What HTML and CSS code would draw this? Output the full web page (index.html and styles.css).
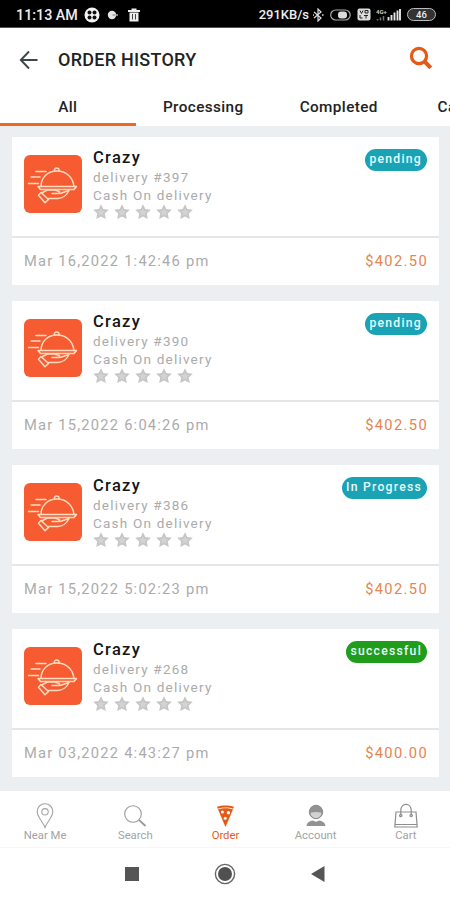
FILE: index.html
```html
<!DOCTYPE html>
<html lang="en">

<head>
  <meta charset="UTF-8">
  <meta name="viewport" content="width=device-width, initial-scale=1">
  <title>Order History</title>
  <link rel="stylesheet" href="styles.css">
</head>

<body>

  <!-- shared icons -->
  <svg class="sprite">
    <symbol id="star" viewBox="0 0 16 16">
      <path d="M8 .3l2.300 4.800 5.500.7-4 3.700 1 5.500L8 12.400l-4.800 2.600 1-5.500L.2 5.800l5.500-.7z" fill="#c6c6c6" />
      <path d="M8 4l1.200 2.700 2.900.3L10 9l.6 2.900L8 10.500l-2.600 1.400L6 9 3.900 7l2.900-.3z" fill="#d3d3d3" />
    </symbol>
    <symbol id="dish" viewBox="0 0 58 58">
      <g fill="none" stroke="#ffdcc0" stroke-width="1.500" stroke-linecap="round" stroke-linejoin="round">
        <path d="M12 16.500h10M7 22h9M4.500 28.500h10" />
        <path d="M17 31.500C17 22 24 16 33 16s16 6 17 15.500" />
        <path d="M30.500 15.800c-1-3.600 5.500-3.600 4.500 0" />
        <path d="M14 31.500h38.500l-2.500 3H16.500z" />
        <path d="M17 37.500l-2.500 2.800 6.500 7.500 3.500-3.300zM18.500 37.500l5-2.500h7l5 1.500-1 2h-6.500M24.500 43.500h9c5 0 9.500-3.500 11.500-8l-9 3" />
      </g>
    </symbol>
  </svg>

  <div class="statusBar">
    <div class="statusLeft">
      <span class="clock">11:13 AM</span>
      <svg class="iconApp" width="16" height="16" viewBox="0 0 16 16">
        <circle cx="8" cy="8" r="7.500" fill="#f4f4f4" />
        <g fill="#111">
          <circle cx="5.500" cy="5.500" r="2" />
          <circle cx="10.500" cy="5.500" r="2" />
          <circle cx="5.500" cy="10.500" r="2" />
          <circle cx="10.500" cy="10.500" r="2" />
        </g>
      </svg>
      <svg class="iconDot" width="12" height="10" viewBox="0 0 12 10">
        <circle cx="5" cy="5" r="4.200" fill="#e5e5e5" />
        <path d="M5.500 5h3" stroke="#777" />
        <circle cx="10" cy="5" r="1" fill="#aaa" />
      </svg>
      <svg class="iconTrash" width="12" height="14" viewBox="0 0 12 14">
        <path d="M0 2h3.500V.5h5V2H12v2H0zM1.500 4.500h9V13.500h-9z" fill="#eee" />
        <path d="M4.500 6v5.500M7.500 6v5.500" stroke="#444" />
      </svg>
    </div>
    <div class="statusRight">
      <span class="speed">291KB/s</span>
      <svg width="12" height="14" viewBox="0 0 12 14" fill="none" stroke="#ddd" stroke-width="1.200">
        <path d="M2 4l7 6-3 3V1l3 3-7 6" />
        <path d="M1 7h1M10 7h1.500" stroke-width="1.600" />
      </svg>
      <svg class="iconToggle" width="21" height="12" viewBox="0 0 21 12">
        <rect x=".7" y="1" width="19.500" height="10" rx="5" fill="none" stroke="#aaa" stroke-width="1.200" />
        <rect x="8" y="2.500" width="9" height="7" rx="3" fill="#ddd" />
      </svg>
      <svg class="iconVolte" width="14" height="13" viewBox="0 0 14 13">
        <rect x=".5" y=".5" width="13" height="12" rx="2" fill="#ddd" />
        <path d="M3 2.500l1.500 3 1.500-3M8 2.500h3v2.500H8zM3 7v3h2.500M7 7.500h4M9 7.500v3" fill="none" stroke="#222" />
      </svg>
      <svg class="iconSignal" width="25" height="13" viewBox="0 0 25 13">
        <text x="0" y="5.500" class="signalText">4G+</text>
        <path d="M1.500 11v1.500M4.500 9.500v3M7.500 8v4.500" stroke="#777" stroke-width="1.500" />
        <path d="M12.500 9v3.500M15.500 7v5.500M18.500 4.500v8M21.500 2.500v10M24 1v11.500" stroke="#e5e5e5" stroke-width="1.900" />
      </svg>
      <span class="battery">46</span>
    </div>
  </div>

  <div class="header">
    <svg width="20" height="20" viewBox="0 0 20 20" fill="none" stroke="#3d4648" stroke-width="1.900">
      <path d="M18.500 10H2M10 1.500L1.800 10l8.200 8.500" />
    </svg>
    <h1>ORDER HISTORY</h1>
    <svg class="searchIcon" width="24" height="24" viewBox="0 0 24 24" fill="none" stroke="#e55a14">
      <circle cx="10" cy="10" r="7.600" stroke-width="3.200" />
      <path d="M15.500 15.500l6.300 6.300" stroke-width="4" />
    </svg>
  </div>

  <div class="tabs">
    <div class="tab active">All</div>
    <div class="tab">Processing</div>
    <div class="tab">Completed</div>
    <div class="tab">Ca</div>
  </div>

  <div class="orders">

    <div class="card">
      <div class="cardTop">
        <svg class="logo"><use href="#dish" /></svg>
        <div class="info">
          <h2>Crazy</h2>
          <p>delivery #397</p>
          <p>Cash On delivery</p>
          <div class="stars">
            <svg><use href="#star" /></svg><svg><use href="#star" /></svg><svg><use href="#star" /></svg><svg><use href="#star" /></svg><svg><use href="#star" /></svg>
          </div>
        </div>
        <span class="badge">pending</span>
      </div>
      <div class="cardBottom">
        <span>Mar 16,2022 1:42:46 pm</span>
        <span class="price">$402.50</span>
      </div>
    </div>

    <div class="card">
      <div class="cardTop">
        <svg class="logo"><use href="#dish" /></svg>
        <div class="info">
          <h2>Crazy</h2>
          <p>delivery #390</p>
          <p>Cash On delivery</p>
          <div class="stars">
            <svg><use href="#star" /></svg><svg><use href="#star" /></svg><svg><use href="#star" /></svg><svg><use href="#star" /></svg><svg><use href="#star" /></svg>
          </div>
        </div>
        <span class="badge">pending</span>
      </div>
      <div class="cardBottom">
        <span>Mar 15,2022 6:04:26 pm</span>
        <span class="price">$402.50</span>
      </div>
    </div>

    <div class="card">
      <div class="cardTop">
        <svg class="logo"><use href="#dish" /></svg>
        <div class="info">
          <h2>Crazy</h2>
          <p>delivery #386</p>
          <p>Cash On delivery</p>
          <div class="stars">
            <svg><use href="#star" /></svg><svg><use href="#star" /></svg><svg><use href="#star" /></svg><svg><use href="#star" /></svg><svg><use href="#star" /></svg>
          </div>
        </div>
        <span class="badge">In Progress</span>
      </div>
      <div class="cardBottom">
        <span>Mar 15,2022 5:02:23 pm</span>
        <span class="price">$402.50</span>
      </div>
    </div>

    <div class="card">
      <div class="cardTop">
        <svg class="logo"><use href="#dish" /></svg>
        <div class="info">
          <h2>Crazy</h2>
          <p>delivery #268</p>
          <p>Cash On delivery</p>
          <div class="stars">
            <svg><use href="#star" /></svg><svg><use href="#star" /></svg><svg><use href="#star" /></svg><svg><use href="#star" /></svg><svg><use href="#star" /></svg>
          </div>
        </div>
        <span class="badge success">successful</span>
      </div>
      <div class="cardBottom">
        <span>Mar 03,2022 4:43:27 pm</span>
        <span class="price">$400.00</span>
      </div>
    </div>

  </div>

  <div class="bottomNav">
    <div class="navItem">
      <svg viewBox="0 0 26 26" fill="none" stroke="#a3a3a3" stroke-width="1.100">
        <path d="M13 24.500C11 19 5.200 14 5.200 8.500a7.800 7.800 0 0 1 15.600 0C20.800 14 15 19 13 24.500z" />
        <circle cx="13" cy="8.800" r="3.200" />
      </svg>
      <span>Near Me</span>
    </div>
    <div class="navItem">
      <svg viewBox="0 0 26 26" fill="none" stroke="#999">
        <circle cx="11" cy="11" r="8.300" stroke-width="1.100" />
        <path d="M17 17l6.500 6" stroke-width="1.800" />
      </svg>
      <span>Search</span>
    </div>
    <div class="navItem active">
      <svg viewBox="0 0 26 26">
        <path d="M3.500 2.500C9 .6 17 .6 22.500 2.500l-.6 2.300C16.500 3 9.500 3 4.100 4.800z" fill="#e55a14" />
        <path d="M4.500 5.500c5-1.800 12-1.800 17 0L13.300 25h-.6z" fill="#e55a14" />
        <g fill="#fff">
          <circle cx="9.500" cy="8.500" r="1.700" />
          <circle cx="16.300" cy="9.300" r="1.900" />
          <circle cx="12.700" cy="15.500" r="1.700" />
        </g>
      </svg>
      <span>Order</span>
    </div>
    <div class="navItem">
      <svg viewBox="0 0 26 26">
        <circle cx="13" cy="9" r="6.700" fill="#929292" stroke="#8a8a8a" />
        <path d="M7.500 9.800c4-1 7-1 11 0-.5 7-10.500 7-11 0z" fill="#d2d2d2" />
        <path d="M3.500 23c.5-4 3.500-5 6.500-5.500 2 1.500 4 1.500 6 0 3 .5 6 1.500 6.500 5.500z" fill="#929292" />
      </svg>
      <span>Account</span>
    </div>
    <div class="navItem">
      <svg viewBox="0 0 26 26" fill="none" stroke="#8e8e8e" stroke-width="1.200">
        <path d="M3 9h20l1.200 15H1.800zM2 21.500h22" />
        <path d="M7.800 12.500V7.500C7.800-.8 18.200-.8 18.200 7.500v5" />
        <circle cx="7.800" cy="12.500" r="1.200" />
        <circle cx="18.200" cy="12.500" r="1.200" />
      </svg>
      <span>Cart</span>
    </div>
  </div>

  <div class="systemNav">
    <svg width="14" height="14"><rect width="14" height="14" fill="#555" /></svg>
    <svg width="22" height="22" viewBox="0 0 22 22">
      <circle cx="11" cy="11" r="9.600" fill="none" stroke="#666" stroke-width="1.400" />
      <circle cx="11" cy="11" r="7" fill="#505050" />
    </svg>
    <svg width="14" height="16"><path d="M0 8L13.500 0v16z" fill="#555" /></svg>
  </div>

</body>

</html>
```
FILE: styles.css
```css
:root {
  --orange: #e55a14;
  --page: #ebeff1;
  --muted: #ababab;
}

* {
  box-sizing: border-box;
}

body {
  margin: 0;
  width: 450px;
  height: 900px;
  overflow: hidden;
  display: flex;
  flex-direction: column;
  background-color: #fff;
  font-family: Roboto, "Liberation Sans", sans-serif;
}

svg {
  display: block;
  flex: none;
}

h1, h2, p {
  margin: 0;
}

.sprite {
  display: none;
}

/* status bar */
.statusBar {
  height: 28px;
  flex: none;
  display: flex;
  justify-content: space-between;
  padding: 2px 14px 0 16px;
  background-color: #000;
  border-bottom: 1px solid #555;
  color: #eee;
  font-weight: 500;
}

.statusLeft, .statusRight {
  display: flex;
  align-items: center;
}

.clock {
  width: 68px;
  font-size: 14.3px;
  white-space: nowrap;
}

.iconDot {
  margin-left: 7px;
}

.iconTrash {
  margin-left: 9px;
}

.speed {
  font-size: 13px;
  margin-right: 3px;
}

.iconToggle {
  margin-left: 6px;
}

.iconVolte {
  margin-left: 6px;
}

.iconSignal {
  margin-left: 5px;
}

.signalText {
  font-size: 6px;
  font-weight: 700;
  fill: #ccc;
}

.battery {
  width: 29px;
  height: 13px;
  margin-left: 6px;
  border: 1px solid #bbb;
  border-radius: 7px;
  background-color: #333;
  font-size: 9.5px;
  line-height: 11px;
  text-align: center;
}

/* title */
.header {
  height: 62px;
  flex: none;
  display: flex;
  align-items: center;
  padding: 1px 17px 0 19px;
}

.header h1 {
  margin-left: 19px;
  font-size: 18px;
  font-weight: 500;
  letter-spacing: 0.25px;
  color: #222;
}

.searchIcon {
  margin: -3px 0 0 auto;
}

/* tabs */
.tabs {
  height: 36px;
  flex: none;
  display: flex;
  overflow: hidden;
}

.tab {
  width: 135.5px;
  flex: none;
  text-align: center;
  font-size: 15.3px;
  font-weight: 500;
  letter-spacing: 0.4px;
  line-height: 35px;
  color: #222;
}

.tab.active {
  border-bottom: 3px solid #ee6820;
}

.tab:last-child {
  padding-left: 31px;
  text-align: left;
}

/* orders */
.orders {
  height: 665px;
  flex: none;
  display: flex;
  flex-direction: column;
  gap: 16px;
  padding: 11px 11px 0 12px;
  background-color: var(--page);
}

.card {
  height: 148px;
  flex: none;
  background-color: #fff;
}

.cardTop {
  height: 101px;
  display: flex;
  align-items: flex-start;
  padding: 11px 12px 0;
  border-bottom: 2px solid #e4e7e9;
}

.logo {
  width: 58px;
  height: 58px;
  margin-top: 7px;
  border-radius: 6px;
  background-color: #f75b31;
}

.info {
  margin-left: 11px;
  color: var(--muted);
}

.info h2 {
  font-size: 16.5px;
  font-weight: 500;
  letter-spacing: 1.3px;
  line-height: 20px;
  color: #151515;
}

.info p {
  font-size: 13.5px;
  letter-spacing: 1.22px;
  line-height: 18px;
}

.stars {
  display: flex;
  gap: 5px;
  margin-left: -0.5px;
}

.stars svg {
  width: 16px;
  height: 16px;
}

.badge {
  height: 22px;
  margin: 1px 0 0 auto;
  padding: 0 5px 0 4px;
  border-radius: 11px;
  background-color: #1aa3b5;
  color: #e9fafc;
  font-size: 12.2px;
  font-weight: 500;
  letter-spacing: 1.25px;
  line-height: 21px;
}

.badge.success {
  background-color: #1f9d1b;
}

.cardBottom {
  height: 47px;
  display: flex;
  align-items: center;
  justify-content: space-between;
  padding: 0 11px 2px 12px;
  color: var(--muted);
  font-size: 14.7px;
  letter-spacing: 1.22px;
}

.price {
  color: #e68450;
  letter-spacing: 1.35px;
}

/* bottom navigation */
.bottomNav {
  height: 57px;
  flex: none;
  display: flex;
  border-bottom: 1px solid #f6f6f6;
}

.navItem {
  width: 90.2px;
  flex: none;
  display: flex;
  flex-direction: column;
  align-items: center;
  padding-top: 12px;
  color: #a3a3a3;
  font-size: 11.3px;
  line-height: 13px;
}

.navItem svg {
  width: 26px;
  height: 26px;
}

.navItem.active {
  color: var(--orange);
}

.navItem.active svg {
  width: 23px;
}

/* system navigation */
.systemNav {
  height: 52px;
  flex: none;
  display: flex;
  align-items: center;
  justify-content: center;
  gap: 75px;
}
```
